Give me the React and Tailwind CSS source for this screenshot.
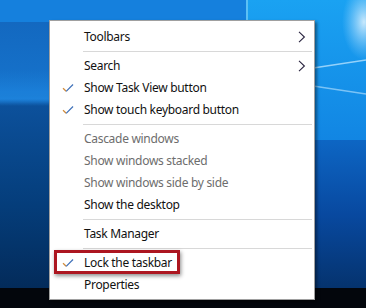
import React from "react";

const Check = () => (
  <svg width="12" height="10" viewBox="0 0 12 10" className="absolute left-[12px] top-[6px]">
    <path d="M1 5.2 L4.2 8.3" stroke="#d08a3a" strokeWidth="1.2" fill="none" />
    <path d="M4.2 8.3 L11 1.5" stroke="#3d6fb8" strokeWidth="1.2" fill="none" />
  </svg>
);

const Chevron = () => (
  <svg width="8" height="12" viewBox="0 0 8 12" className="absolute right-[8px] top-[5px]">
    <path d="M1 0.8 L6.4 6 L1 11.2" stroke="#2a2540" strokeWidth="1.1" fill="none" />
  </svg>
);

function Item({ label, check, sub, disabled }) {
  return (
    <div
      className={
        "relative h-[22px] pl-[34px] flex items-center text-[12px] leading-none tracking-[-0.3px] " +
        (disabled ? "text-[#6d6d6d]" : "text-[#111]")
      }
    >
      {check && <Check />}
      <span>{label}</span>
      {sub && <Chevron />}
    </div>
  );
}

const Sep = () => (
  <div className="h-[7px] flex items-center">
    <div className="h-px w-full ml-[33px] mr-[2px] bg-[#d8d8d8]" />
  </div>
);

function Wallpaper() {
  return (
    <svg width="366" height="288" viewBox="0 0 366 288" className="absolute left-0 top-0">
      <defs>
        <linearGradient id="g1" x1="0" y1="0" x2="0" y2="1">
          <stop offset="0" stopColor="#1265bc" />
          <stop offset="0.32" stopColor="#1673cc" />
          <stop offset="0.36" stopColor="#0c519c" />
          <stop offset="0.7" stopColor="#053e7c" />
          <stop offset="1" stopColor="#032b5a" />
        </linearGradient>
        <linearGradient id="g2" x1="0" y1="0" x2="0" y2="1">
          <stop offset="0" stopColor="#1aa2f2" />
          <stop offset="1" stopColor="#1184e2" />
        </linearGradient>
        <linearGradient id="g3" x1="0" y1="0" x2="0" y2="1">
          <stop offset="0" stopColor="#0d66c4" />
          <stop offset="0.5" stopColor="#0849a0" />
          <stop offset="1" stopColor="#05336e" />
        </linearGradient>
        <radialGradient id="glow" cx="0.5" cy="0.5" r="0.5">
          <stop offset="0" stopColor="#e8f6ff" stopOpacity="0.85" />
          <stop offset="1" stopColor="#9fd8ff" stopOpacity="0" />
        </radialGradient>
        <linearGradient id="band" x1="0" y1="0" x2="0" y2="1">
          <stop offset="0" stopColor="#1a7fd8" stopOpacity="0" />
          <stop offset="0.8" stopColor="#1e86e0" stopOpacity="0.9" />
          <stop offset="1" stopColor="#1e86e0" stopOpacity="0" />
        </linearGradient>
      </defs>
      <rect x="0" y="0" width="366" height="288" fill="url(#g1)" />
      <rect x="0" y="70" width="50" height="36" fill="url(#band)" />
      <rect x="0" y="0" width="247" height="22" fill="#1580dd" />
      <polygon points="247,0 366,0 366,148 300,148 300,22 247,22" fill="url(#g2)" />
      <rect x="300" y="140" width="66" height="148" fill="url(#g3)" />
      <rect x="246" y="0" width="2" height="22" fill="#5cc0f5" />
      <path d="M300 70 L366 60" stroke="#bfe6ff" strokeOpacity="0.75" strokeWidth="1.6" />
      <path d="M300 84 L366 94" stroke="#bfe6ff" strokeOpacity="0.6" strokeWidth="1.4" />
      <ellipse cx="364" cy="22" rx="22" ry="38" fill="url(#glow)" />
    </svg>
  );
}

export default function App() {
  return (
    <div
      className="relative w-[366px] h-[308px] overflow-hidden flex flex-col"
      style={{ fontFamily: '"Noto Sans", "Open Sans", sans-serif' }}
    >
      <div className="relative h-[288px] w-full">
        <Wallpaper />
      </div>
      <div className="h-[20px] w-full bg-[#03060c]" />

      <div className="absolute left-[49px] top-[20px] w-[266px] h-[280px] bg-white border border-[#a0a0a0] shadow-[2px_2px_3px_rgba(0,0,0,0.45)] pt-[5px]">
        <Item label="Toolbars" sub />
        <Sep />
        <Item label="Search" sub />
        <Item label="Show Task View button" check />
        <Item label="Show touch keyboard button" check />
        <Sep />
        <Item label="Cascade windows" disabled />
        <Item label="Show windows stacked" disabled />
        <Item label="Show windows side by side" disabled />
        <Item label="Show the desktop" />
        <Sep />
        <Item label="Task Manager" />
        <Sep />
        <Item label="Lock the taskbar" check />
        <Item label="Properties" />

        <div className="absolute left-[4px] top-[229px] w-[126px] h-[24px] border-[3px] border-[#ac1620] shadow-[1px_2px_4px_rgba(0,0,0,0.45)]" />
      </div>
    </div>
  );
}
